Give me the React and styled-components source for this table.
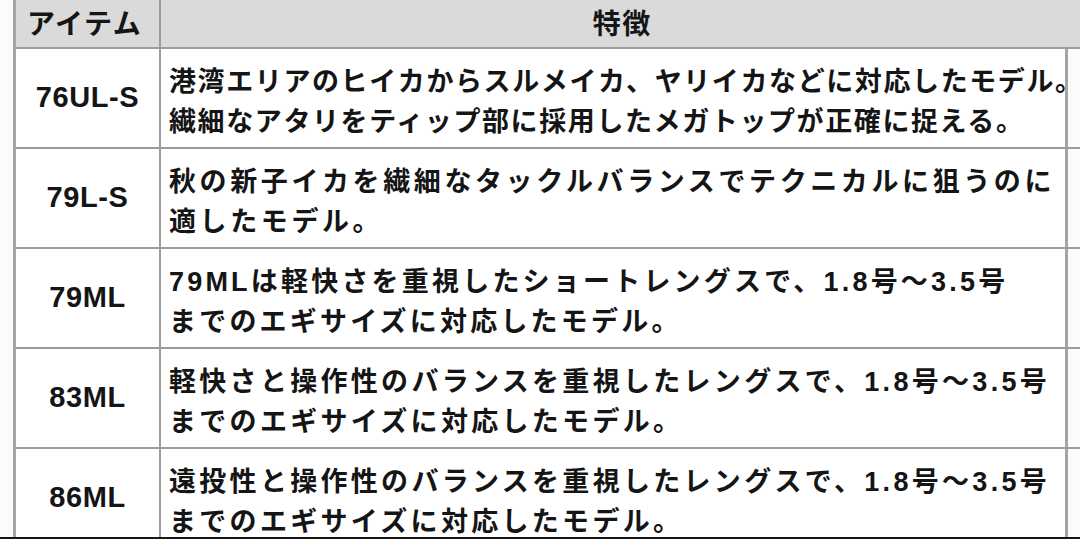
import React from 'react';
import styled, { createGlobalStyle } from 'styled-components';

const rows = [
  {
    item: '76UL-S',
    spacing: 1.6,
    lines: [
      '港湾エリアのヒイカからスルメイカ、ヤリイカなどに対応したモデル。',
      '繊細なアタリをティップ部に採用したメガトップが正確に捉える。',
    ],
  },
  {
    item: '79L-S',
    spacing: 3.6,
    lines: ['秋の新子イカを繊細なタックルバランスでテクニカルに狙うのに', '適したモデル。'],
  },
  {
    item: '79ML',
    spacing: 3.2,
    lines: ['79MLは軽快さを重視したショートレングスで、1.8号〜3.5号', 'までのエギサイズに対応したモデル。'],
  },
  {
    item: '83ML',
    spacing: 3.3,
    lines: ['軽快さと操作性のバランスを重視したレングスで、1.8号〜3.5号', 'までのエギサイズに対応したモデル。'],
  },
  {
    item: '86ML',
    spacing: 3.3,
    lines: ['遠投性と操作性のバランスを重視したレングスで、1.8号〜3.5号', 'までのエギサイズに対応したモデル。'],
  },
];

export default function App() {
  return (
    <>
      <GlobalStyle />
      <Frame>
        <Table>
          <HeadCell>アイテム</HeadCell>
          <HeadCell $center>特徴</HeadCell>
          {rows.map((r) => (
            <React.Fragment key={r.item}>
              <ItemCell>{r.item}</ItemCell>
              <TextCell $spacing={r.spacing}>
                {r.lines.map((l) => (
                  <Line key={l}>{l}</Line>
                ))}
              </TextCell>
            </React.Fragment>
          ))}
        </Table>
      </Frame>
    </>
  );
}

/* ===== styled ===== */
const GlobalStyle = createGlobalStyle`
  html, body {
    margin: 0;
    padding: 0;
    background: #fff;
  }
  body {
    font-family: "Liberation Sans", "Noto Sans CJK JP", sans-serif;
    color: #151515;
  }
`;

const Frame = styled.div`
  width: 1080px;
  height: 539px;
  box-sizing: border-box;
  overflow: hidden;
  padding-left: 13px;
  background: #fbfbfb;
  border-bottom: 2px solid #161616;
`;

const Table = styled.div`
  width: 1055px;
  display: grid;
  grid-template-columns: 145px 1fr;
  grid-auto-rows: 100px;
  grid-template-rows: 49px;
  border-left: 3px solid #a4a4a4;
  border-right: 3px solid #a4a4a4;
  box-sizing: border-box;
  background: #fff;
`;

const Cell = styled.div`
  box-sizing: border-box;
  border-bottom: 2px solid #9c9c9c;
  display: flex;
  align-items: center;
`;

const HeadCell = styled(Cell)`
  background: #dadada;
  font-weight: 700;
  font-size: 28px;
  letter-spacing: 1.5px;
  padding: 0 0 4px ${(p) => (p.$center ? 0 : 11)}px;
  justify-content: ${(p) => (p.$center ? 'center' : 'flex-start')};
  &:first-child {
    border-right: 2px solid #9c9c9c;
  }
`;

const ItemCell = styled(Cell)`
  justify-content: center;
  border-right: 2px solid #9c9c9c;
  font-weight: 700;
  font-size: 29px;
  letter-spacing: 0.6px;
  padding-bottom: 2px;
`;

const TextCell = styled(Cell)`
  flex-direction: column;
  align-items: flex-start;
  justify-content: center;
  padding: 8px 0 0 8px;
  font-weight: 700;
  font-size: 27px;
  letter-spacing: ${(p) => p.$spacing}px;
  white-space: nowrap;
`;

const Line = styled.div`
  line-height: 40px;
`;
